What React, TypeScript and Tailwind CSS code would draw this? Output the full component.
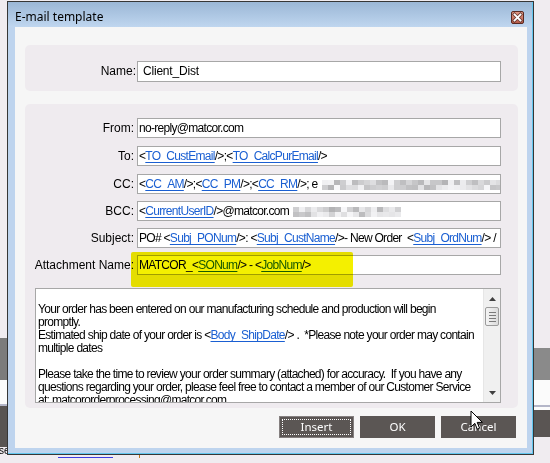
import React from "react";

function rng(seed: number) {
  let s = seed;
  return () => {
    s = (s * 9301 + 49297) % 233280;
    return s / 233280;
  };
}

function Mosaic({ cols, seed }: { cols: number; seed: number }) {
  const r = rng(seed);
  const rows: number[][] = [[], []];
  for (let row = 0; row < 2; row++) {
    for (let c = 0; c < cols; c++) {
      rows[row].push(Math.round(178 + r() * 70));
    }
  }
  return (
    <span className="inline-flex flex-col align-middle ml-[4px]">
      {rows.map((rw, i) => (
        <span key={i} className="flex">
          {rw.map((v, j) => (
            <span
              key={j}
              className="w-[6px] h-[5px]"
              style={{ backgroundColor: `rgb(${v},${v},${v + 2})` }}
            />
          ))}
        </span>
      ))}
    </span>
  );
}

const Tag = ({ c }: { c: string }) => (
  <>
    <span>&lt;</span>
    <span className="text-[#1a5fd2] underline decoration-[#1a5fd2] underline-offset-[2px]">{c}</span>
    <span>/&gt;</span>
  </>
);

function Field({ children }: { children: React.ReactNode }) {
  return (
    <div className="w-[364px] h-[20px] border border-[#a7a7a7] bg-white pl-[1px] text-[12px] leading-[18px] tracking-[-0.7px] text-black whitespace-pre overflow-hidden">
      {children}
    </div>
  );
}

function Row({ label, children, mt }: { label: string; children: React.ReactNode; mt: string }) {
  return (
    <div className={`flex items-center ${mt}`}>
      <div className="w-[109px] mr-[3px] text-right text-[12px] text-black whitespace-nowrap leading-[14px]">
        {label}
      </div>
      <Field>{children}</Field>
    </div>
  );
}

function Btn({ label, focus }: { label: string; focus?: boolean }) {
  return (
    <div
      className={`relative w-[75px] h-[22px] flex items-center justify-center bg-[#5b5654] text-white text-[11.5px] ${
        focus ? "border border-[#858080]" : ""
      }`}
    >
      {focus && <div className="absolute inset-[2px] border border-dotted border-white" />}
      <span className="relative">{label}</span>
    </div>
  );
}

export default function App() {
  const bodyLines: React.ReactNode[] = [
    "",
    "Your order has been entered on our manufacturing schedule and production will begin",
    "promptly.",
    <>
      Estimated ship date of your order is <Tag c="Body_ShipDate" /> .  *Please note your order may contain
    </>,
    "multiple dates",
    "",
    "Please take the time to review your order summary (attached) for accuracy.  If you have any",
    "questions regarding your order, please feel free to contact a member of our Customer Service",
    "at: matcororderprocessing@matcor.com",
  ];

  return (
    <div className="relative w-[550px] h-[463px] overflow-hidden bg-[#f0ecf0] font-['Liberation_Sans',Arial,sans-serif]">
      {/* desktop behind the dialog */}
      <div className="absolute left-0 top-[338px] w-[7px] h-[42px] bg-[#7c7c7c]" />
      <div className="absolute left-0 top-[380px] w-[7px] h-[24px] bg-[#fbfbfb]" />
      <div className="absolute left-0 top-[404px] w-[7px] h-[2px] bg-[#b4b6c8]" />
      <div className="absolute left-0 top-[406px] w-[7px] h-[41px] bg-[#595553]" />
      <div className="absolute left-[-1px] top-[445px] text-[10px] leading-[12px] text-black">se</div>

      <div className="absolute left-[534px] top-[348px] w-[16px] h-[32px] bg-[#8a8a8a]" />
      <div className="absolute left-[534px] top-[380px] w-[16px] h-[25px] bg-[#fbfbfb]" />
      <div className="absolute left-[534px] top-[405px] w-[16px] h-[2px] bg-[#b4b6c8]" />
      <div className="absolute left-[534px] top-[407px] w-[16px] h-[3px] bg-[#fbfbfb]" />
      <div className="absolute left-[534px] top-[410px] w-[16px] h-[27px] bg-[#5a5553]" />

      <div className="absolute left-[58px] top-[457px] w-[55px] h-[1px] bg-[#3d3de0]" />
      <div className="absolute left-[139px] top-[455px] w-[1px] h-[3px] bg-[#c07820]" />

      {/* dialog window */}
      <div className="absolute left-[7px] top-[1px] w-[527px] h-[454px] border border-[#363636] bg-[#bed4ee]">
        <div className="w-full h-full flex flex-col border-r border-b border-[#62c6ee]">
          {/* title bar */}
          <div className="h-[25px] flex items-start bg-linear-to-b from-[#9bb7d6] to-[#bfd6ef] pl-[7px] pr-[8px]">
            <div className="pt-[7px] text-[12px] leading-[16px] text-black font-['Noto_Sans',sans-serif]">
              E-mail template
            </div>
            <svg className="ml-auto mt-[9px]" width="13" height="13" viewBox="0 0 13 13">
              <defs>
                <linearGradient id="cg" x1="0" y1="0" x2="0" y2="1">
                  <stop offset="0" stopColor="#e09a88" />
                  <stop offset="1" stopColor="#b85a48" />
                </linearGradient>
              </defs>
              <rect x="0.5" y="0.5" width="12" height="12" rx="1.5" fill="url(#cg)" stroke="#5a2a22" />
              <path d="M3.5 3.5 L9.5 9.5 M9.5 3.5 L3.5 9.5" stroke="#6b3a32" strokeWidth="3.4" strokeLinecap="square" />
              <path d="M3.5 3.5 L9.5 9.5 M9.5 3.5 L3.5 9.5" stroke="#ffffff" strokeWidth="1.8" strokeLinecap="square" />
            </svg>
          </div>

          {/* client row */}
          <div className="flex pl-[7px]">
            <div className="w-[512px] h-[421px] bg-[#f6f6f6] flex flex-col pl-[10px] pt-[18px]">
              {/* name panel */}
              <div className="w-[493px] h-[46px] rounded-[5px] bg-[#efebef] flex items-center pt-[6px]">
                <div className="w-[111px] text-right text-[12px] leading-[14px] text-black">Name:</div>
                <div className="ml-[1px] w-[364px] h-[21px] border border-[#a7a7a7] bg-white pl-[5px] text-[12px] leading-[19px] tracking-[-0.2px] text-black">
                  Client_Dist
                </div>
              </div>

              {/* main panel */}
              <div className="mt-[13px] w-[493px] h-[304px] rounded-[5px] bg-[#efebef] flex flex-col pt-[14px]">
                <Row label="From:" mt="mt-0">
                  no-reply@matcor.com
                </Row>
                <Row label="To:" mt="mt-[8px]">
                  <Tag c="TO_CustEmail" />;<Tag c="TO_CalcPurEmail" />
                </Row>
                <Row label="CC:" mt="mt-[8px]">
                  <Tag c="CC_AM" />;<Tag c="CC_PM" />;<Tag c="CC_RM" />; e
                  <Mosaic cols={32} seed={17} />
                </Row>
                <Row label="BCC:" mt="mt-[7px]">
                  <Tag c="CurrentUserID" />@matcor.com
                  <Mosaic cols={18} seed={5} />
                </Row>
                <Row label="Subject:" mt="mt-[7px]">
                  PO# <Tag c="Subj_PONum" />: <Tag c="Subj_CustName" />- New Order  <Tag c="Subj_OrdNum" /> /
                </Row>
                <Row label="Attachment Name:" mt="mt-[7px]">
                  MATCOR_<Tag c="SONum" /> - <Tag c="JobNum" />
                </Row>

                {/* body text area */}
                <div className="mt-[13px] ml-[10px] w-[466px] h-[115px] border border-[#a7a7a7] bg-white flex overflow-hidden">
                  <div className="flex-1 pl-[2px] pt-[1px] text-[12px] leading-[13px] tracking-[-0.7px] text-black whitespace-pre overflow-hidden">
                    {bodyLines.map((l, i) => (
                      <div key={i} className="h-[13px]">
                        {l}
                      </div>
                    ))}
                  </div>
                  <div className="w-[17px] h-full bg-[#f0f0f0] border-l border-[#e6e6e6] flex flex-col items-center">
                    <svg className="mt-[8px]" width="7" height="4" viewBox="0 0 7 4">
                      <path d="M0 4 L3.5 0 L7 4 Z" fill="#404040" />
                    </svg>
                    <div className="mt-[6px] w-[14px] h-[19px] rounded-[2px] border border-[#9c9c9c] bg-linear-to-r from-[#f4f4f4] to-[#dcdcdc] flex flex-col items-center justify-center gap-[2px]">
                      <div className="w-[7px] h-px bg-[#7a7a7a]" />
                      <div className="w-[7px] h-px bg-[#7a7a7a]" />
                      <div className="w-[7px] h-px bg-[#7a7a7a]" />
                      <div className="w-[7px] h-px bg-[#7a7a7a]" />
                    </div>
                    <svg className="mt-auto mb-[7px]" width="7" height="4" viewBox="0 0 7 4">
                      <path d="M0 0 L7 0 L3.5 4 Z" fill="#404040" />
                    </svg>
                  </div>
                </div>
              </div>

              {/* buttons */}
              <div className="mt-[8px] flex justify-end gap-[6px] pr-[11px] w-[502px] font-['Noto_Sans',sans-serif]">
                <Btn label="Insert" focus />
                <Btn label="OK" />
                <Btn label="Cancel" />
              </div>
            </div>
          </div>
        </div>
      </div>

      {/* highlighter annotation */}
      <div className="absolute left-[131px] top-[252px] w-[222px] h-[35px] rounded-[2px] bg-[#f4f000] mix-blend-multiply" />

      {/* mouse cursor */}
      <svg className="absolute left-[470px] top-[410px]" width="14" height="21" viewBox="0 0 14 21">
        <path
          d="M1 1 L1 17 L4.8 13.3 L7.3 19.2 L9.6 18.2 L7.2 12.4 L12.4 12.4 Z"
          fill="#ffffff"
          stroke="#000000"
          strokeWidth="1"
          strokeLinejoin="miter"
        />
      </svg>
    </div>
  );
}
